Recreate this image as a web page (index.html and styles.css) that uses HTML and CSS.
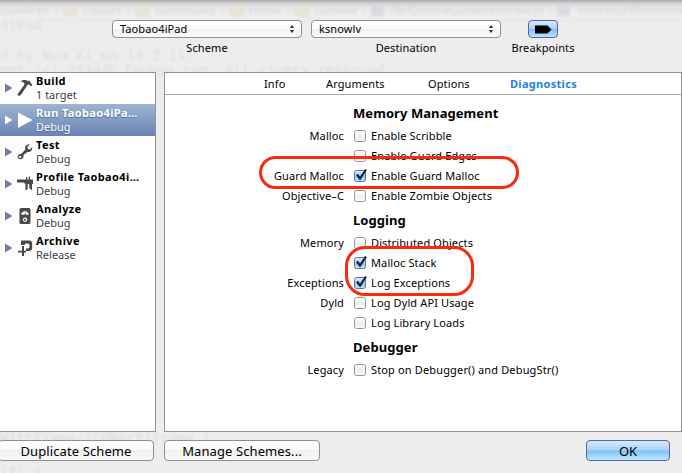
FILE: index.html
```html
<!DOCTYPE html>
<html lang="en">
<head>
<meta charset="utf-8">
<title>Edit Scheme</title>
<link rel="stylesheet" href="styles.css">
</head>
<body>
<div class="sheet">
  <div class="ghost" aria-hidden="true">
    <div class="crumbs"><span>bao4iPad</span><b>›</b><i></i><span>Classes</span><b>›</b><i></i><span>BizModules</span><b>›</b><i></i><span>Home</span><b>›</b><i></i><span>Subview</span><b>›</b><i class="m"></i><span>TBHDHomeGuideItemView.m</span><b>›</b><i class="m"></i><span>-refreshUIWithHome</span></div>
    <pre class="code top">4iPad

d by Nuo Xi on 14-2-11.
ght (c) 2014年 Taobao.com. All rights reserved.</pre>
    <pre class="code bottom">WithFrame:(CGRect)frame {

lf) {</pre>
  </div>

  <header class="toolbar">
    <div class="tool"><div class="popup"><span>Taobao4iPad</span><svg width="6" height="8" viewBox="0 0 6 8"><path d="M3 0L5.2 3H.8zM3 8L.8 5h4.4z"/></svg></div><div class="caption">Scheme</div></div>
    <div class="tool"><div class="popup"><span>ksnowlv</span><svg width="6" height="8" viewBox="0 0 6 8"><path d="M3 0L5.2 3H.8zM3 8L.8 5h4.4z"/></svg></div><div class="caption">Destination</div></div>
    <div class="tool break"><div class="bp"><svg width="17" height="9" viewBox="0 0 17 9"><path d="M0 .5h12.5L16.5 4.5l-4 4H0z"/></svg></div><div class="caption">Breakpoints</div></div>
  </header>

  <main class="panels">
    <nav class="schemes">
      <div class="scheme"><svg class="tri" viewBox="0 0 8 10"><path d="M0 .5L7.5 5 0 9.5z"/></svg>
        <svg class="icon" viewBox="0 0 16 18"><path d="M3.500 2.300C6 .5 9 .5 11 2l1.200-.4 3.300 4.700-1.600 1-2.200-2-1 .5L3.800 15.900Q1.600 17.700.3 15.500L7.500 5.500 7.200 3.900Q5.200 2.600 3.500 2.300z"/></svg>
        <div><strong>Build</strong><small>1 target</small></div></div>
      <div class="scheme selected"><svg class="tri" viewBox="0 0 8 10"><path d="M0 .5L7.5 5 0 9.5z"/></svg>
        <svg class="icon" viewBox="0 0 16 18"><path d="M1 1.5L15.5 9 1 17z"/></svg>
        <div><strong>Run Taobao4iPa…</strong><small>Debug</small></div></div>
      <div class="scheme"><svg class="tri" viewBox="0 0 8 10"><path d="M0 .5L7.5 5 0 9.5z"/></svg>
        <svg class="icon" viewBox="0 0 16 18"><path fill-rule="evenodd" d="M12.700 1.200L10.300 4l.6 2 2.200.4 2-2.700c.8 3.800-2 5.800-4.700 5.200L6.500 12c.7 3.600-3 5.800-5.500 3.300C.2 12.700 2 10.500 4.700 10.400L8.300 6.400C7.400 3.200 9.600.8 12.700 1.200zM3.200 12.700a1.200 1.200 0 1 0 .1 0z"/></svg>
        <div><strong>Test</strong><small>Debug</small></div></div>
      <div class="scheme"><svg class="tri" viewBox="0 0 8 10"><path d="M0 .5L7.5 5 0 9.5z"/></svg>
        <svg class="icon" viewBox="0 0 16 18"><path d="M0 4.500h9V2h1.300v2.500h1.500V1.500h1.300v3H16v4.500h-1v6.500L12.300 13V9h-1.600v5l-2.200 1.500V9L6.500 7.500H0z"/></svg>
        <div><strong>Profile Taobao4i…</strong><small>Debug</small></div></div>
      <div class="scheme"><svg class="tri" viewBox="0 0 8 10"><path d="M0 .5L7.5 5 0 9.5z"/></svg>
        <svg class="icon" viewBox="0 0 16 18"><path fill-rule="evenodd" d="M4 1h8q1.500 0 1.500 1.500v13q0 1.500-1.500 1.500H4q-1.500 0-1.500-1.500v-13Q2.500 1 4 1zM3.900 7q4-6 8.200 0l-2.300 1.100-1.300-.9V5h-.6v2.200L6.200 8.100zM8 10.500a2.200 2.200 0 1 0 .1 0zM8 11.700a1 1 0 1 1-.1 0z"/></svg>
        <div><strong>Analyze</strong><small>Debug</small></div></div>
      <div class="scheme"><svg class="tri" viewBox="0 0 8 10"><path d="M0 .5L7.5 5 0 9.5z"/></svg>
        <svg class="icon" viewBox="0 0 16 18"><path d="M4 1.500h8q3.200 0 3.200 3.500v3.500Q15.200 12 12 12H9V9.500h2q1.500 0 1.500-2V6q0-1.500-1.500-1.500H8V6H4zM5 7h2v4.800h2v1.700H7V17H5v-3.500H1v-1.700h4z"/></svg>
        <div><strong>Archive</strong><small>Release</small></div></div>
    </nav>

    <section class="detail">
      <div class="tabs"><span class="info">Info</span><span class="args">Arguments</span><span class="opts">Options</span><span class="active">Diagnostics</span></div>
      <div class="form">
        <h2 class="first">Memory Management</h2>
        <div class="row"><span class="label">Malloc</span><i class="box"></i><span>Enable Scribble</span></div>
        <div class="row"><span class="label"></span><i class="box"></i><span>Enable Guard Edges</span></div>
        <div class="row"><span class="label">Guard Malloc</span><i class="box on"><svg viewBox="0 0 14 14"><path d="M3 6.500L6 10.500 12 1.500"/></svg></i><span>Enable Guard Malloc</span></div>
        <div class="row"><span class="label">Objective–C</span><i class="box"></i><span>Enable Zombie Objects</span></div>
        <h2>Logging</h2>
        <div class="row"><span class="label">Memory</span><i class="box"></i><span>Distributed Objects</span></div>
        <div class="row"><span class="label"></span><i class="box on"><svg viewBox="0 0 14 14"><path d="M3 6.500L6 10.500 12 1.500"/></svg></i><span>Malloc Stack</span></div>
        <div class="row"><span class="label">Exceptions</span><i class="box on"><svg viewBox="0 0 14 14"><path d="M3 6.500L6 10.500 12 1.500"/></svg></i><span>Log Exceptions</span></div>
        <div class="row"><span class="label">Dyld</span><i class="box"></i><span>Log Dyld API Usage</span></div>
        <div class="row"><span class="label"></span><i class="box"></i><span>Log Library Loads</span></div>
        <h2>Debugger</h2>
        <div class="row"><span class="label">Legacy</span><i class="box"></i><span class="wide">Stop on Debugger() and DebugStr()</span></div>
      </div>
    </section>
  </main>

  <footer class="actions">
    <button class="dup">Duplicate Scheme</button><button class="manage">Manage Schemes...</button><button class="ok">OK</button>
  </footer>
  <div class="mark guard"></div>
  <div class="mark logs"></div>
</div>
</body>
</html>
```

FILE: styles.css
```css
* { box-sizing: border-box; }
body { margin: 0; font: 11px/14px "Noto Sans", "Open Sans", sans-serif; color: #000; }
.sheet { position: relative; width: 682px; height: 473px; overflow: hidden; background: linear-gradient(#aaa 0, #cfcfcf 3px, #e6e6e6 7px, #ededed 12px); display: flex; flex-direction: column; }

/* Editor window showing faintly through the sheet */
.ghost { position: absolute; inset: 0; filter: blur(.9px); }
.crumbs { display: flex; align-items: center; height: 21px; border-bottom: 1px solid #e5e5e5; font-size: 11.2px; color: #d6d6d6; white-space: nowrap; }
.crumbs b { margin: 0 5px; font-weight: 400; }
.crumbs i { flex: none; width: 15px; height: 11px; margin-right: 5px; background: #e6e2d6; }
.crumbs i.m { width: 13px; background: #dadae3; }
.code { position: absolute; left: 0; margin: 0; font: 14px/15px "DejaVu Sans Mono", "Noto Sans CJK SC", monospace; color: #d6e2d6; }
.code.top { top: 18px; }
.code.bottom { top: 430px; line-height: 17px; color: #dbdbe2; }

.toolbar { position: relative; height: 72px; padding: 20px 0 0 112px; display: flex; gap: 9px; }
.tool { width: 190px; text-align: center; }
.tool.break { width: 84px; margin-left: -9px; }
.popup { height: 18px; display: flex; align-items: center; justify-content: space-between; padding: 0 6px 0 7px; border: 1px solid #909090; border-radius: 4px; background: linear-gradient(#fff, #fbfbfb 50%, #f0f0f0 50%, #fafafa); letter-spacing: .1px; }
.popup svg { fill: #333; }
.caption { margin-top: 3px; letter-spacing: .1px; }
.bp { width: 30px; height: 18px; margin: 0 auto; display: flex; align-items: center; justify-content: center; border: 1px solid #5a63a8; border-radius: 4px; background: linear-gradient(#d5e9fb, #a9d3f8 48%, #83c0f5 52%, #b9e4ff); }

.panels { position: relative; height: 360px; display: flex; gap: 8px; }
.schemes { width: 156px; background: #fff; border: 1px solid #929292; border-left: 0; }
.detail { width: 518px; background: #fff; border: 1px solid #929292; }
.scheme { height: 32px; display: flex; align-items: center; padding-left: 5px; }
.scheme:first-child { height: 31px; padding-bottom: 1px; }
.tri { width: 8px; height: 10px; margin-right: 4px; fill: #718096; }
.icon { width: 16px; height: 18px; margin-right: 3px; fill: #494949; }
.scheme strong, .scheme small { display: block; height: 14px; font-size: 11px; line-height: 14px; white-space: nowrap; }
.scheme strong { letter-spacing: .38px; }
.scheme small { color: #3d3d3d; }
.selected { background: linear-gradient(#9db5d1, #6a83b4); }
.selected .tri, .selected .icon { fill: #fff; }
.selected strong, .selected small { color: #fff; text-shadow: 0 1px 1px #52678f; }

.tabs { height: 22px; display: flex; align-items: center; padding-left: 99px; border-bottom: 1px solid #aaa; letter-spacing: .12px; }
.info { width: 62px; }
.args { width: 102px; }
.opts { width: 82px; }
.active { color: #1d83db; font-weight: 700; letter-spacing: .3px; }
.form { padding-top: 7px; }
.form h2 { height: 27px; margin: 0 0 0 188px; padding-top: 5px; font-size: 13px; line-height: 18px; letter-spacing: .07px; }
.form h2.first { height: 24px; padding-top: 2px; }
.row { height: 20px; display: flex; align-items: center; letter-spacing: .12px; white-space: nowrap; }
.label { width: 179px; margin-right: 10px; text-align: right; }
.box { width: 12px; height: 12px; margin-right: 5px; border: 1px solid #999; border-radius: 2.5px; background: linear-gradient(#fff, #eee 55%, #fafafa); }
.box.on { border-color: #5f6fa8; background: linear-gradient(#dcecfb, #92c6f5 60%, #bfe6ff); }
.box svg { display: block; width: 14px; height: 14px; margin: -3px 0 0 -1px; overflow: visible; fill: none; stroke: #14202f; stroke-width: 2.2; }
.wide { letter-spacing: .15px; }

.actions { position: relative; height: 41px; padding-top: 8px; display: flex; }
button { height: 21px; padding: 0; font: 13px/18px "Noto Sans", "Open Sans", sans-serif; color: #000; border: 1px solid #909090; border-radius: 4px; background: linear-gradient(#fff, #fafafa 50%, #f0f0f0 50%, #fafafa); }
.dup { width: 156px; margin-left: -2px; letter-spacing: .1px; }
.manage { width: 156px; margin-left: 10px; letter-spacing: .1px; }
.ok { width: 84px; margin-left: 266px; border-color: #5a63a8; background: linear-gradient(#d5e9fb, #a9d3f8 48%, #83c0f5 52%, #b9e9ff); }

/* Hand-placed red annotations over the form */
.mark { position: absolute; border: 3px solid #fa2b0c; }
.guard { left: 259px; top: 156px; width: 260px; height: 33px; border-radius: 17px; }
.logs { left: 345px; top: 246px; width: 129px; height: 50px; border-radius: 20px; }
```
